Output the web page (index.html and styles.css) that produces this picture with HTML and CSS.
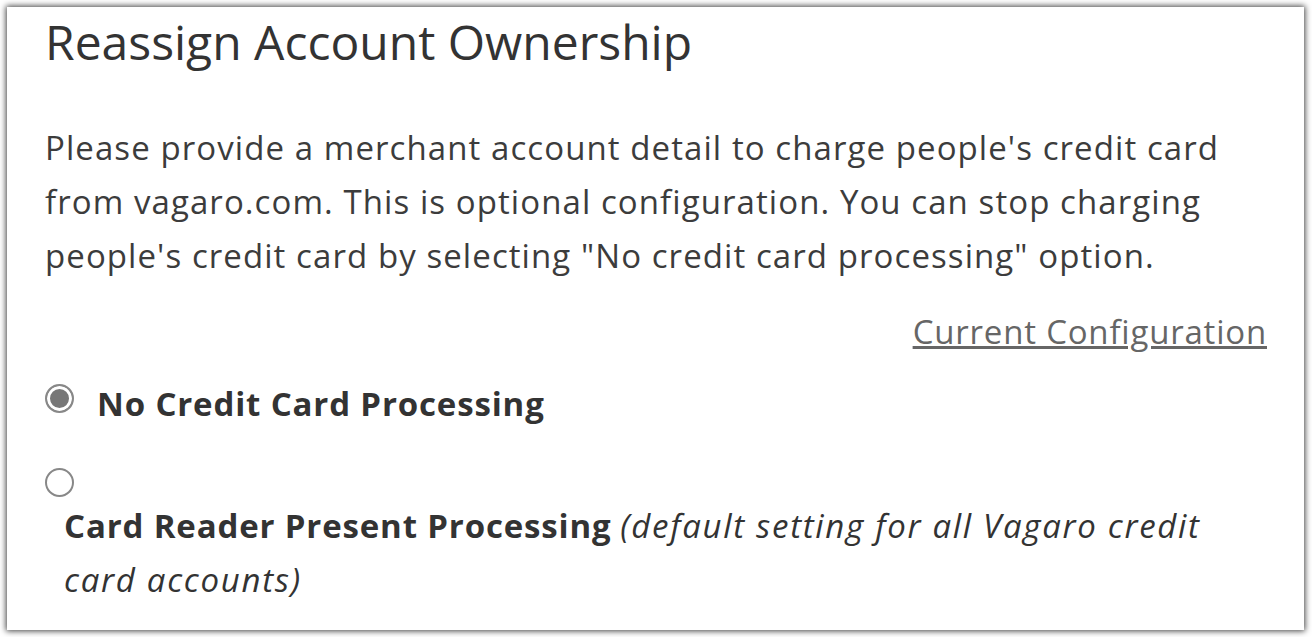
FILE: index.html
```html
<!DOCTYPE html>
<html lang="en">
<head>
    <meta charset="UTF-8">
    <title>Reassign Account Ownership</title>
    <link rel="stylesheet" href="styles.css">
</head>
<body>
    <div class="panel">
        <h1 class="panel-title">Reassign Account Ownership</h1>
        <p class="intro">Please provide a merchant account detail to charge people's credit card from vagaro.com. This is optional configuration. You can stop charging people's credit card by selecting "No credit card processing" option.</p>
        <div class="config-link">
            <a href="#">Current Configuration</a>
        </div>
        <label class="option option-inline">
            <input type="radio" name="processing" checked>
            <span class="option-name">No Credit Card Processing</span>
        </label>
        <label class="option option-stacked">
            <input type="radio" name="processing">
            <div class="option-text"><b class="option-name">Card Reader Present Processing</b> <em>(default setting for all Vagaro credit card accounts)</em></div>
        </label>
    </div>
</body>
</html>
```

FILE: styles.css
```css
body {
    margin: 0;
    padding: 7px 8px 7px 7px;
    background-color: #fff;
    font-family: "Open Sans", Lato, Arial, sans-serif;
    color: #333;
}
.panel {
    background-color: #fff;
    box-shadow: 0 0 6px 1px rgba(0, 0, 0, 0.75);
    height: 623px;
    box-sizing: border-box;
    padding: 0 37px 0 38px;
    overflow: hidden;
}
.panel-title {
    font-size: 48px;
    font-weight: 400;
    line-height: 56px;
    margin: 7px 0 0;
    color: #333;
}
.intro {
    font-size: 33px;
    line-height: 54px;
    letter-spacing: 1.08px;
    margin: 51px 0 0;
    color: #3c3c3c;
}
.config-link {
    text-align: right;
    font-size: 33px;
    line-height: 54px;
    letter-spacing: 0.8px;
    margin-top: 22px;
}
.config-link a {
    color: #666;
}
.option {
    display: flex;
    font-size: 33px;
    line-height: 54px;
    color: #333;
}
.option-inline {
    align-items: flex-start;
    gap: 23px;
    margin-top: 18px;
}
.option-stacked {
    flex-direction: column;
    margin-top: 37px;
}
.option-stacked .option-text {
    padding-left: 19px;
    margin-top: 2px;
}
.option-name {
    font-weight: 700;
    letter-spacing: 0.85px;
}
.option em {
    font-style: italic;
    letter-spacing: 1.7px;
}
.option input {
    appearance: none;
    -webkit-appearance: none;
    width: 29px;
    height: 29px;
    margin: 0;
    border: 2px solid #888;
    border-radius: 50%;
    box-sizing: border-box;
    background-color: #fff;
    flex-shrink: 0;
}
.option-inline input {
    margin-top: 7px;
}
.option input:checked {
    background-color: #777;
    box-shadow: inset 0 0 0 3px #fff;
}
```
